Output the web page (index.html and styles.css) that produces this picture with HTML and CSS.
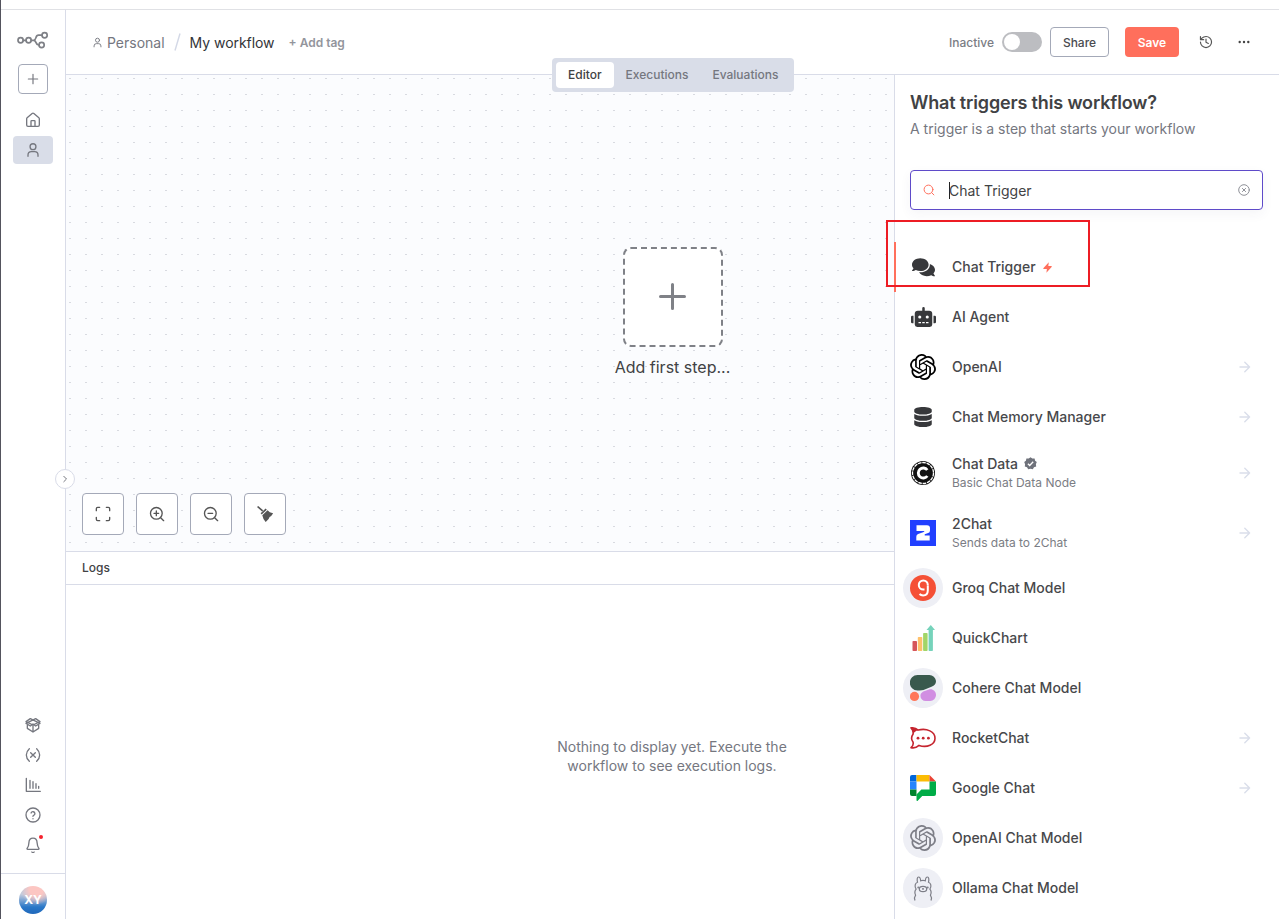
FILE: index.html
```html
<!DOCTYPE html>
<html lang="en">
<head>
<meta charset="utf-8">
<title>My workflow</title>
<link rel="stylesheet" href="styles.css">
</head>
<body>
<svg width="0" height="0" class="defs">
  <symbol id="plus" viewBox="0 0 24 24"><path d="M4 12h16M12 4v16"/></symbol>
  <symbol id="user" viewBox="0 0 24 24"><circle cx="12" cy="7" r="4.400"/><path d="M4.500 21.500v-2a5 5 0 0 1 5-5h5a5 5 0 0 1 5 5v2"/></symbol>
  <symbol id="arrow" viewBox="0 0 12 12"><path d="M1 6h9.600M5.800 1.200 10.600 6l-4.800 4.800"/></symbol>
  <symbol id="openai" viewBox="0 0 24 24"><path d="M22.2819 9.8211a5.9847 5.9847 0 0 0-.5157-4.9108 6.0462 6.0462 0 0 0-6.5098-2.9A6.0651 6.0651 0 0 0 4.9807 4.1818a5.9847 5.9847 0 0 0-3.9977 2.9 6.0462 6.0462 0 0 0 .7427 7.0966 5.98 5.98 0 0 0 .511 4.9107 6.051 6.051 0 0 0 6.5146 2.9001A5.9847 5.9847 0 0 0 13.2599 24a6.0557 6.0557 0 0 0 5.7718-4.2058 5.9894 5.9894 0 0 0 3.9977-2.9001 6.0557 6.0557 0 0 0-.7475-7.0729zm-9.022 12.6081a4.4755 4.4755 0 0 1-2.8764-1.0408l.1419-.0804 4.7783-2.7582a.7948.7948 0 0 0 .3927-.6813v-6.7369l2.02 1.1686a.071.071 0 0 1 .038.052v5.5826a4.504 4.504 0 0 1-4.4945 4.4944zm-9.6607-4.1254a4.4708 4.4708 0 0 1-.5346-3.0137l.142.0852 4.783 2.7582a.7712.7712 0 0 0 .7806 0l5.8428-3.3685v2.3324a.0804.0804 0 0 1-.0332.0615L9.74 19.9502a4.4992 4.4992 0 0 1-6.1408-1.6464zM2.3408 7.8956a4.485 4.485 0 0 1 2.3655-1.9728V11.6a.7664.7664 0 0 0 .3879.6765l5.8144 3.3543-2.0201 1.1685a.0757.0757 0 0 1-.071 0l-4.8303-2.7865A4.504 4.504 0 0 1 2.3408 7.872zm16.5963 3.8558L13.1038 8.364 15.1192 7.2a.0757.0757 0 0 1 .071 0l4.8303 2.7913a4.4944 4.4944 0 0 1-.6765 8.1042v-5.6772a.79.79 0 0 0-.407-.667zm2.0107-3.0231l-.142-.0852-4.7735-2.7818a.7759.7759 0 0 0-.7854 0L9.409 9.2297V6.8974a.0662.0662 0 0 1 .0284-.0615l4.8303-2.7866a4.4992 4.4992 0 0 1 6.6802 4.66zM8.3065 12.863l-2.02-1.1638a.0804.0804 0 0 1-.038-.0567V6.0742a4.4992 4.4992 0 0 1 7.3757-3.4537l-.142.0805L8.704 5.459a.7948.7948 0 0 0-.3927.6813zm1.0976-2.3654l2.602-1.4998 2.6069 1.4998v2.9994l-2.5974 1.4997-2.6067-1.4997Z"/></symbol>
</svg>
<div class="app">
  <aside class="sidebar">
    <svg class="logo line" width="32" height="18" viewBox="0 0 32 18"><circle cx="3.600" cy="9.300" r="2.600"/><circle cx="11.600" cy="9.300" r="2.600"/><circle cx="27.600" cy="4.200" r="2.600"/><circle cx="24.600" cy="14" r="2.600"/><path d="M6.200 9.300H9M14.200 9.300h2.500M25 4.200h-3.500c-3.600 0-1.700 5.100-4.800 5.100 3.100 0 1.600 4.700 4.800 4.700h.500"/></svg>
    <button class="add"><svg class="line" width="14" height="14"><use href="#plus"/></svg></button>
    <nav class="nav">
      <a class="nav-item"><svg class="line" width="16" height="16" viewBox="0 0 24 24"><path d="M15 21v-7a1 1 0 0 0-1-1h-4a1 1 0 0 0-1 1v7M2.500 10a2 2 0 0 1 .7-1.500l7.500-6.300a2 2 0 0 1 2.600 0l7.500 6.300a2 2 0 0 1 .7 1.500v9.500a2 2 0 0 1-2 2h-15a2 2 0 0 1-2-2z"/></svg></a>
      <a class="nav-item active"><svg class="line" width="16" height="16"><use href="#user"/></svg></a>
    </nav>
    <nav class="nav nav-bottom">
      <a class="nav-item"><svg class="line" width="16" height="16" viewBox="0 0 24 24"><path d="M12 22.500V13M1.500 7 8 2.500 22.500 9.500 16 13.500 12 10.500 8 13.500 1.500 9.500 16 2.500 22.500 7 12 12zM3.500 12.500v4.500L12 22.500l8.500-5.500v-4.500"/></svg></a>
      <a class="nav-item"><svg class="line" width="16" height="16" viewBox="0 0 24 24"><path d="M6.500 2.500C.5 8 .5 16 6.500 21.500M17.500 2.500c6 5.500 6 13.500 0 19M8.500 8.500l7 7M15.500 8.500l-7 7"/></svg></a>
      <a class="nav-item"><svg class="line" width="16" height="16" viewBox="0 0 24 24"><path d="M2 2v19.500h21M7.500 5v12M12 7v10M16.500 10v7M20.500 14v3"/></svg></a>
      <a class="nav-item"><svg class="line" width="16" height="16" viewBox="0 0 24 24"><circle cx="12" cy="12" r="10.500"/><path d="M9.100 9a3 3 0 0 1 5.800 1c0 2-3 2.500-3 4M12 17.500v.1"/></svg></a>
      <a class="nav-item bell"><svg class="line" width="16" height="16" viewBox="0 0 24 24"><path d="M10.300 22.500a2 2 0 0 0 3.400 0M3.300 16.800A1 1 0 0 0 4 18.500h16a1 1 0 0 0 .7-1.700C19.400 15.500 18.500 14 18.200 9 18 4.500 15.500 1.800 12 1.800S6 4.500 5.800 9c-.2 5-1.100 6.500-2.500 7.800"/></svg><i class="dot"></i></a>
    </nav>
    <div class="account"><span class="avatar">XY</span></div>
    <button class="expand"><svg class="line" width="8" height="8" viewBox="0 0 8 8"><path d="M2.800 1.300 5.500 4 2.800 6.700"/></svg></button>
  </aside>
  <div class="page">
    <header class="header">
      <svg class="line crumb-icon" width="11" height="11"><use href="#user"/></svg>
      <span class="crumb">Personal</span>
      <svg class="slash" width="7" height="18" viewBox="0 0 7 18"><path d="M6 .5 1 17.500"/></svg>
      <span class="name">My workflow</span>
      <span class="tag">+ Add tag</span>
      <span class="status">Inactive</span>
      <span class="switch"></span>
      <button class="share">Share</button>
      <button class="save">Save</button>
      <svg class="line history" width="14" height="14" viewBox="0 0 24 24"><path d="M2.500 12a9.500 9.500 0 1 0 9.500-9.500A10 10 0 0 0 5 5.500L2.500 8M2.500 2.500V8H8M12 7v5.500l4 2"/></svg>
      <svg class="more" width="12" height="4" viewBox="0 0 12 4"><circle cx="1.700" cy="2" r="1.200"/><circle cx="6" cy="2" r="1.200"/><circle cx="10.300" cy="2" r="1.200"/></svg>
      <div class="tabs"><span class="tab selected">Editor</span><span class="tab">Executions</span><span class="tab">Evaluations</span></div>
    </header>
    <div class="body">
      <main class="work">
        <section class="canvas">
          <div class="first-step">
            <div class="step-box"><svg width="28" height="28" viewBox="0 0 28 28"><path d="M13.500 1.500v24M1.500 13.500h24"/></svg></div>
            <span class="step-label">Add first step...</span>
          </div>
          <div class="controls">
            <button><svg class="line" width="16" height="16" viewBox="0 0 24 24"><path d="M2 7V4a2 2 0 0 1 2-2h3M17 2h3a2 2 0 0 1 2 2v3M22 17v3a2 2 0 0 1-2 2h-3M7 22H4a2 2 0 0 1-2-2v-3"/></svg></button>
            <button><svg class="line" width="16" height="16" viewBox="0 0 24 24"><circle cx="11" cy="11" r="8.800"/><path d="m22 22-4.500-4.500M11 7.500v7M7.500 11h7"/></svg></button>
            <button><svg class="line" width="16" height="16" viewBox="0 0 24 24"><circle cx="11" cy="11" r="8.800"/><path d="m22 22-4.500-4.500M7.500 11h7"/></svg></button>
            <button><svg class="broom" width="16" height="16" viewBox="0 0 16 16"><path d="M0 .9 1.200 0l5 4.300L5 5.600z"/><path d="m3.600 7.300 5-4.700 1.200 1.100-5.100 4.800z"/><path d="m5.300 9.200 5.300-4.900 2.200 2 3.400 1-2 2.700-1.600 1-1 1.900-2.900 3-2.200-2.900z"/></svg></button>
          </div>
        </section>
        <section class="logs">
          <div class="logs-head">Logs</div>
          <p class="logs-empty">Nothing to display yet. Execute the workflow to see execution logs.</p>
        </section>
      </main>
      <aside class="panel">
        <h1>What triggers this workflow?</h1>
        <p class="sub">A trigger is a step that starts your workflow</p>
        <div class="search">
          <svg class="line lens" width="12" height="12" viewBox="0 0 12 12"><circle cx="5.500" cy="5.500" r="4.400"/><path d="m8.700 8.700 2.200 2.200"/></svg>
          <i class="caret"></i><span class="query">Chat Trigger</span>
          <svg class="line clear" width="12" height="12" viewBox="0 0 12 12"><circle cx="6" cy="6" r="5.300"/><path d="m4.400 4.400 3.200 3.200M7.600 4.400 4.400 7.600"/></svg>
        </div>
        <ul class="nodes">
          <li class="node current"><span class="ic"><svg class="dark" width="23" height="20.500" viewBox="0 0 576 512"><path d="M416 192c0-88.400-93.100-160-208-160S0 103.600 0 192c0 34.300 14.100 65.900 38 92-13.400 30.200-35.500 54.200-35.800 54.500-2.200 2.300-2.800 5.700-1.500 8.700S4.800 352 8 352c36.600 0 66.900-12.300 88.700-25 32.200 15.700 70.300 25 111.300 25 114.900 0 208-71.600 208-160zm122 220c23.900-26 38-57.700 38-92 0-66.900-53.500-124.200-129.300-148.100.9 6.600 1.300 13.300 1.300 20.100 0 105.900-107.700 192-240 192-10.800 0-21.300-.8-31.700-1.900C207.800 439.600 281.800 480 368 480c41 0 79.100-9.200 111.300-25 21.800 12.700 52.100 25 88.700 25 3.200 0 6.100-1.900 7.300-4.800 1.300-2.900.7-6.300-1.500-8.700-.3-.3-22.400-24.200-35.800-54.500z"/></svg></span><span class="label">Chat Trigger<svg class="bolt" width="9" height="11" viewBox="0 0 9 11"><path d="M5.800.3 5.300 4h2.900c.6 0 .7.500.4.900L3.400 10.700 3.900 7H.900C.2 7 .2 6.400.5 6z"/></svg></span></li>
          <li class="node"><span class="ic"><svg class="dark" width="25" height="20" viewBox="0 0 640 512"><path d="M32 224h32v192H32a31.960 31.960 0 0 1-32-32V256a31.960 31.960 0 0 1 32-32zm512-48v272a64.060 64.060 0 0 1-64 64H160a64.060 64.060 0 0 1-64-64V176a79.974 79.974 0 0 1 80-80h112V32a32 32 0 0 1 64 0v64h112a79.974 79.974 0 0 1 80 80zm-280 80a40 40 0 1 0-40 40 39.997 39.997 0 0 0 40-40zm-8 128h-64v32h64zm96 0h-64v32h64zm104-128a40 40 0 1 0-40 40 39.997 39.997 0 0 0 40-40zm-8 128h-64v32h64zm192-128v128a31.960 31.960 0 0 1-32 32h-32V224h32a31.960 31.960 0 0 1 32 32z"/></svg></span><span class="label">AI Agent</span></li>
          <li class="node"><span class="ic"><svg width="26" height="26"><use href="#openai"/></svg></span><span class="label">OpenAI</span><svg class="line go" width="12" height="12"><use href="#arrow"/></svg></li>
          <li class="node"><span class="ic"><svg class="dark" width="18" height="20" viewBox="0 0 448 512"><path d="M448 73.143v45.714C448 159.143 347.667 192 224 192S0 159.143 0 118.857V73.143C0 32.857 100.333 0 224 0s224 32.857 224 73.143zM448 176v102.857C448 319.143 347.667 352 224 352S0 319.143 0 278.857V176c48.125 33.143 136.208 48.572 224 48.572S399.874 209.143 448 176zm0 160v102.857C448 479.143 347.667 512 224 512S0 479.143 0 438.857V336c48.125 33.143 136.208 48.572 224 48.572S399.874 369.143 448 336z"/></svg></span><span class="label">Chat Memory Manager</span><svg class="line go" width="12" height="12"><use href="#arrow"/></svg></li>
          <li class="node two first"><span class="ic"><svg width="26" height="26" viewBox="0 0 26 26"><circle cx="13" cy="13" r="12" fill="#111"/><circle cx="13" cy="13" r="10.500" fill="none" stroke="#fff" stroke-width="1.300" stroke-dasharray="3.600 .8"/><circle cx="13" cy="13" r="9" fill="#111"/><path d="M17.300 10A5 5 0 1 0 17.300 16" fill="none" stroke="#fff" stroke-width="2.900"/></svg></span><span class="label">Chat Data<svg class="verified" width="13" height="13" viewBox="0 0 13 13"><path d="m6.500.2 1.800 1.400 2.300-.2.500 2.300 1.700 1.400-.9 2.100.3 2.300-2.200.8-1.200 2-2.300-.6-2.300.6-1.200-2-2.200-.8.300-2.300L.2 5.100l1.700-1.400.5-2.300 2.300.2z"/><path class="tick" d="m3.900 6.700 1.800 1.800 3.500-3.700"/></svg><small>Basic Chat Data Node</small></span><svg class="line go" width="12" height="12"><use href="#arrow"/></svg></li>
          <li class="node two"><span class="ic"><svg width="26" height="26" viewBox="0 0 26 26"><path fill="#213fff" d="M0 0h26v26H0z"/><path fill="#fff" d="M6.500 5.300h10.500q3 0 3 3v2.200q0 2-1.800 2.600l-3.500 1.200v1.200h5v5H6.300v-3.700q0-2 1.800-2.700l5-1.900q1.300-.5 1.300-1.200H6.500z"/></svg></span><span class="label">2Chat<small>Sends data to 2Chat</small></span><svg class="line go" width="12" height="12"><use href="#arrow"/></svg></li>
          <li class="node"><span class="ic round"><svg width="26" height="26" viewBox="0 0 26 26"><circle cx="13" cy="13" r="13" fill="#f55036"/><path d="M17.800 10.200v5.300c0 3-2 4.900-4.700 4.900-1.500 0-2.700-.5-3.600-1.400M17.800 10a4.500 4.500 0 1 0-4.500 4.500h1.200" fill="none" stroke="#fff" stroke-width="2"/></svg></span><span class="label">Groq Chat Model</span></li>
          <li class="node"><span class="ic"><svg width="26" height="26" viewBox="0 0 26 26"><rect x="2.500" y="16" width="4.500" height="10" rx=".8" fill="#d6565b"/><rect x="7.800" y="12" width="4.500" height="14" rx=".8" fill="#ffc16b"/><rect x="13.100" y="8" width="4.500" height="18" rx=".8" fill="#a2d568"/><path d="M18.600 25.300V5h-2.100L20.800 0l4.200 5h-2.100v20.300q0 .7-.7.700h-2.900q-.7 0-.7-.7z" fill="#76d3bb"/></svg></span><span class="label">QuickChart</span></li>
          <li class="node"><span class="ic round"><svg width="26" height="26" viewBox="0 0 26 26"><path fill="#39594d" d="M7.500 0h11.800A6.700 6.700 0 0 1 26 6c0 3-1.500 4.500-4.500 5.800L13.500 15q-2 .6-6 .4A7.700 7.700 0 0 1 7.500 0z"/><circle cx="4.500" cy="21.400" r="4.600" fill="#ff7759"/><path fill="#d18ee2" d="M15.500 15.700 19 14.500c3.500-1 7 1.800 7 5.300a6 6 0 0 1-6 6.200h-4.300a5.300 5.300 0 0 1-5.300-5.300c0-2.400 1.800-4 5.100-5z"/></svg></span><span class="label">Cohere Chat Model</span></li>
          <li class="node"><span class="ic"><svg width="26" height="22" viewBox="0 0 26 22"><path d="M1 .8c2.800-.2 5.300.7 7.100 2.300C17 .8 25 4.800 25 11.200S17 21.200 9 18.400c-2.200 2-5 2.900-8 2.200 2-1.700 2.600-3.400 2-5.600-1.700-2.300-1.700-5.400 0-7.700C3.500 4.600 2.800 2.500 1 .8z" fill="#fff" stroke="#c5252f" stroke-width="1.600" stroke-linejoin="round"/><path d="M1 .8c2.800-.2 5.300.7 7.100 2.300C5.800 4 4.200 5.400 3 7.300 3.500 4.600 2.800 2.500 1 .8z" fill="#c5252f"/><g fill="#c5252f"><circle cx="8" cy="11.200" r="1.400"/><circle cx="13.200" cy="11.200" r="1.400"/><circle cx="18.400" cy="11.200" r="1.400"/></g></svg></span><span class="label">RocketChat</span><svg class="line go" width="12" height="12"><use href="#arrow"/></svg></li>
          <li class="node"><span class="ic"><svg width="26" height="26" viewBox="0 0 26 26"><path fill="#0066da" d="M2 0h4.500v6.500H0V2a2 2 0 0 1 2-2z"/><path fill="#2684fc" d="M0 6.500h6.500v8H0z"/><path fill="#fbbc04" d="M6.500 0h13v6.500h-13z"/><path fill="#ea4335" d="m19.500 0 6.500 6.500h-6.500z"/><path fill="#00832d" d="M0 14.500h6.500V21H2a2 2 0 0 1-2-2z"/><path fill="#00ac47" d="M19.500 6.500H26V19a2 2 0 0 1-2 2H12.200l-4.500 4.700c-.5.500-1.200.2-1.200-.5v-5.800l4.900-4.900h8.100z"/></svg></span><span class="label">Google Chat</span><svg class="line go" width="12" height="12"><use href="#arrow"/></svg></li>
          <li class="node"><span class="ic round"><svg class="muted" width="26" height="26"><use href="#openai"/></svg></span><span class="label">OpenAI Chat Model</span></li>
          <li class="node"><span class="ic round"><svg width="26" height="26" viewBox="0 0 26 26" fill="none" stroke="#7d7e87" stroke-width="1.200"><path d="M5 25.500c-.8-2-.5-3.800.6-5.300-1-2-1-4.200.5-6C4.300 11.500 5 8 7.500 7.200 6.800 4.500 7.200 2 8.500 2s2 1.500 2.200 3.800c1.500-.6 3.100-.6 4.600 0C15.500 3.500 16.200 2 17.500 2s1.700 2.500 1 5.200c2.500.8 3.200 4.300 1.400 7 1.500 1.800 1.500 4 .5 6 1.100 1.500 1.400 3.300.6 5.300"/><ellipse cx="13" cy="14" rx="3.700" ry="2.600"/><path d="M12.300 13.400 13 14l.7-.6M13 14v1"/><circle cx="8.300" cy="12.400" r=".4"/><circle cx="17.700" cy="12.400" r=".4"/></svg></span><span class="label">Ollama Chat Model</span></li>
        </ul>
      </aside>
    </div>
  </div>
  <div class="highlight"></div>
</div>
</body>
</html>
```
FILE: styles.css
```css
* { box-sizing: border-box; }
body { margin: 0; background: #fff; font-family: Inter, "Liberation Sans", sans-serif; font-size: 14px; color: #414244; }
button { font: inherit; padding: 0; background: #fff; border: 1px solid #a4a9b8; border-radius: 4px; color: #555; display: flex; align-items: center; justify-content: center; }
svg { display: block; flex: none; }
.defs { position: absolute; }
.line { fill: none; stroke: currentColor; stroke-width: 2; stroke-linecap: round; stroke-linejoin: round; }
.app { position: relative; width: 1279px; height: 919px; padding-top: 9px; display: flex; border-left: 1px solid #53535d; overflow: hidden; }
.sidebar { position: relative; width: 65px; flex: none; border-top: 1px solid #e0e1e5; border-right: 1px solid #d9dce8; display: flex; flex-direction: column; align-items: center; color: #75777f; padding-top: 21px; }
.logo { stroke-width: 1.700; color: #7e8086; }
.add { width: 30px; height: 30px; margin-top: 15px; color: #75777f; }
.nav { display: flex; flex-direction: column; gap: 2px; margin-top: 12px; }
.nav-item { width: 40px; height: 28px; border-radius: 4px; display: flex; align-items: center; justify-content: center; position: relative; }
.active { background: #d9dde8; }
.nav-bottom { margin-top: auto; margin-bottom: 14px; }
.dot { position: absolute; width: 4px; height: 4px; border-radius: 50%; background: #f5222d; left: 26px; top: 4px; }
.account { width: 100%; height: 46px; border-top: 1px solid #d9dce8; display: flex; justify-content: center; padding-top: 12px; }
.avatar { width: 28px; height: 28px; border-radius: 50%; background: radial-gradient(circle at 62% 12%, #fcc6c2 0 22%, rgba(252,198,194,0) 52%), linear-gradient(#c3cbdc 30%, #2a78c8 75%, #1f68bb); color: #fff; font-size: 12px; font-weight: 700; line-height: 28px; text-align: center; }
.expand { position: absolute; left: 54px; top: 459px; width: 20px; height: 20px; border-radius: 50%; border-color: #d9dce8; color: #75777f; z-index: 3; }
.expand svg { stroke-width: 1; }
.page { flex: 1; min-width: 0; display: flex; flex-direction: column; }
.header { position: relative; height: 66px; flex: none; border-top: 1px solid #e0e1e5; border-bottom: 1px solid #d9dce8; display: flex; align-items: center; padding: 0 29px 0 26px; }
.crumb-icon { color: #75777f; }
.crumb { margin-left: 4px; color: #75777f; font-size: 14px; }
.slash { margin-left: 9px; fill: none; stroke: #d3d8e6; stroke-width: 1.400; }
.name { margin-left: 9px; color: #333438; font-size: 14px; letter-spacing: -.050px; }
.tag { margin-left: 14px; font-size: 12px; font-weight: 600; color: #93959c; }
.status { margin-left: auto; font-size: 12px; font-weight: 500; color: #7b7d84; }
.switch { width: 40px; height: 20px; margin-left: 8px; border-radius: 10px; background: #bcbdc1; display: flex; padding: 2px; }
.switch::before { content: ""; width: 16px; height: 16px; border-radius: 50%; background: #fff; }
.share, .save { height: 30px; font-size: 12px; font-weight: 500; color: #4b4c50; }
.share { width: 59px; margin-left: 8px; }
.save { width: 54px; margin-left: 16px; border: 0; background: #ff6f5c; color: #fff; font-weight: 600; }
.history { margin-left: 20px; color: #555; }
.more { margin-left: 25px; fill: #444; }
.tabs { position: absolute; left: 486px; top: 48px; z-index: 2; height: 34px; padding: 4px; display: flex; background: #d9dde8; border-radius: 4px; }
.tab { height: 26px; padding: 0 12px; line-height: 26px; font-size: 12px; font-weight: 500; color: #75777f; border-radius: 4px; }
.selected { background: #fff; color: #414244; }
.body { flex: 1; min-height: 0; display: flex; }
.work { width: 828px; flex: none; display: flex; flex-direction: column; }
.canvas { height: 476px; flex: none; display: flex; flex-direction: column; background: conic-gradient(from 90deg at 14px 15px, #d8dae0 25%, transparent 0) 5px 4px / 16px 16px #fbfcfe; padding: 172px 16px 16px; }
.first-step { width: 140px; display: flex; flex-direction: column; align-items: center; align-self: center; margin-left: 385px; }
.step-box { width: 100px; height: 100px; display: flex; align-items: center; justify-content: center; border: 2px dashed #7f8187; border-radius: 8px; background: #fff; }
.step-box path { fill: none; stroke: #7f8187; stroke-width: 3; stroke-linecap: round; }
.step-label { margin-top: 10px; font-size: 16px; line-height: 20px; white-space: nowrap; color: #414244; }
.controls { display: flex; gap: 12px; margin-top: auto; }
.controls button { width: 42px; height: 42px; }
.broom { fill: #555; }
.logs { flex: 1; display: flex; flex-direction: column; border-top: 1px solid #d9dce8; }
.logs-head { height: 33px; border-bottom: 1px solid #d9dce8; padding-left: 16px; line-height: 32px; font-size: 12px; font-weight: 500; }
.logs-empty { width: 240px; margin: 152px 0 0 486px; font-size: 14px; line-height: 19px; text-align: center; color: #75777f; }
.panel { flex: 1; border-left: 1px solid #d9dce8; padding: 16px 16px 0 15px; }
h1 { margin: 0; font-size: 18px; line-height: 24px; font-weight: 600; letter-spacing: -.150px; color: #414244; }
.sub { margin: 4px 0 0; font-size: 14px; line-height: 20px; color: #75777f; }
.search { height: 40px; margin-top: 31px; padding: 0 12px; border: 1px solid #5f4bc9; border-radius: 4px; display: flex; align-items: center; box-shadow: 0 4px 12px rgba(60,60,100,.05); }
.lens { color: #ff6f5c; stroke-width: 1; }
.caret { width: 1px; height: 17px; margin-left: 14px; background: #222; }
.query { margin-left: -1px; font-size: 14px; }
.clear { margin-left: auto; color: #8f9198; stroke-width: 1; }
.nodes { list-style: none; margin: 32px 0 0 -15px; padding: 0; }
.node { position: relative; display: flex; align-items: center; height: 50px; padding-right: 12px; }
.node.two { height: 60px; }
.node.two.first { height: 61px; padding-top: 1px; }
.current::before { content: ""; position: absolute; left: -1px; top: 0; width: 2px; height: 50px; background: #ff6f5c; }
.ic { width: 40px; height: 40px; margin-left: 8px; display: flex; align-items: center; justify-content: center; }
.round { background: #eeeff5; border-radius: 50%; }
.dark { fill: #37383b; }
.muted { fill: #7d7e87; }
.label { display: flex; flex-wrap: wrap; align-items: center; margin-left: 9px; width: 260px; font-size: 14px; font-weight: 500; line-height: 18px; color: #47484b; }
.label small { width: 100%; padding-top: 1px; font-size: 12px; font-weight: 400; line-height: 18px; color: #7b7d84; }
.bolt { margin-left: 7px; fill: #ff6f5c; }
.verified { margin-left: 6px; fill: #6f727b; }
.tick { fill: none; stroke: #fff; stroke-width: 1.300; }
.go { margin-left: auto; color: #dadeea; stroke-width: 1.400; }
.highlight { position: absolute; left: 885px; top: 220px; width: 204px; height: 67px; border: 2px solid #ed1c24; z-index: 5; }
```
